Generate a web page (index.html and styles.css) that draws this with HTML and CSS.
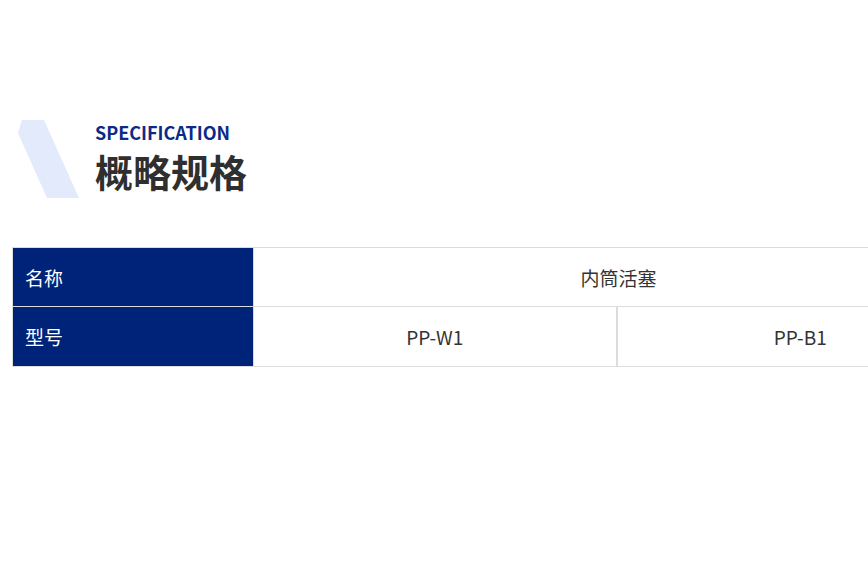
FILE: index.html
```html
<!DOCTYPE html>
<html lang="zh">
<head>
<meta charset="utf-8">
<title>概略规格</title>
<link rel="stylesheet" href="styles.css">
</head>
<body>
<div class="page">
  <div class="heading">
    <svg class="deco" width="62" height="79" viewBox="0 0 62 79" aria-hidden="true">
      <polygon points="4,0 26,0 61,78 29,78 0,13" fill="#e2eafc"/>
    </svg>
    <div class="titles">
      <div class="eyebrow">SPECIFICATION</div>
      <h2 class="title">概略规格</h2>
    </div>
  </div>
  <table class="spec">
    <colgroup>
      <col class="c-label">
      <col class="c-a">
      <col class="c-b">
    </colgroup>
    <tr class="row-name">
      <th class="label">名称</th>
      <td class="value" colspan="2">内筒活塞</td>
    </tr>
    <tr class="row-model">
      <th class="label">型号</th>
      <td class="value split">PP-W1</td>
      <td class="value">PP-B1</td>
    </tr>
  </table>
</div>
</body>
</html>
```

FILE: styles.css
```css
html, body {
  margin: 0;
  padding: 0;
  background: #fff;
  overflow: hidden;
}
body {
  font-family: "Noto Sans CJK SC", "Noto Sans", sans-serif;
  color: #333;
}
.page {
  padding-top: 120px;
  width: 868px;
  overflow: hidden;
}
.heading {
  display: flex;
  align-items: flex-start;
  padding-left: 18px;
}
.deco {
  display: block;
  flex: none;
}
.titles {
  margin-left: 15px;
}
.eyebrow {
  font-size: 18px;
  font-weight: 700;
  color: #0b2a86;
  line-height: 25px;
}
.title {
  margin: 0;
  font-size: 38px;
  font-weight: 700;
  color: #2f2f2f;
  line-height: 52px;
}
.spec {
  margin: 48px 0 0 12px;
  border-collapse: collapse;
  width: 971px;
  table-layout: fixed;
}
.c-label { width: 241px; }
.c-a { width: 363px; }
.c-b { width: 367px; }
.spec th, .spec td {
  border: 1px solid #dcdcdc;
  height: 58px;
  padding: 0;
  font-size: 19px;
  font-weight: 400;
}
.spec .row-model th, .spec .row-model td {
  height: 59px;
}
.spec .label {
  background: #00237a;
  color: #fff;
  text-align: left;
  padding-left: 12px;
}
.spec .value {
  text-align: center;
  color: #333;
}
.spec .split {
  border-right: 2px solid #dcdcdc;
}
```
